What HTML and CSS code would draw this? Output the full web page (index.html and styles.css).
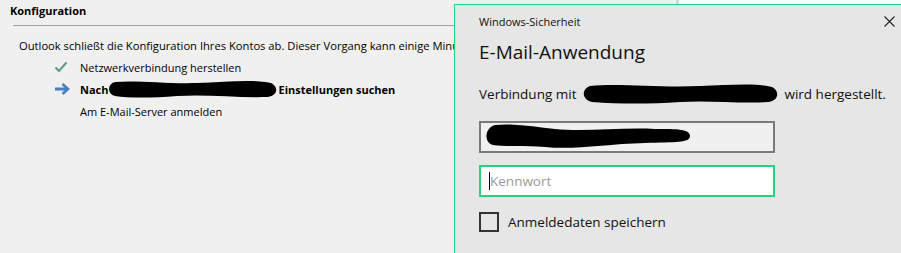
FILE: index.html
```html
<!doctype html>
<html>
<head>
  <link rel="stylesheet" href="styles.css">
</head>
<body>

  <div class="wizard">
    <div class="wizard-head">Konfiguration</div>
    <div class="wizard-rule"></div>
    <p class="intro">Outlook schließt die Konfiguration Ihres Kontos ab. Dieser Vorgang kann einige Minuten dauern.</p>
    <ul class="steps">
      <li class="step done">
        <span class="mark">
          <svg width="14" height="12" viewBox="0 0 14 12"><path d="M1.5 6.5 L5 10 L12.5 1.5" fill="none" stroke="#5f9e88" stroke-width="2.2"/></svg>
        </span>
        <span>Netzwerkverbindung herstellen</span>
      </li>
      <li class="step current">
        <span class="mark">
          <svg width="16" height="12" viewBox="0 0 16 12"><path d="M1 6 H13" stroke="#4a7fbd" stroke-width="3"/><path d="M8.5 1 L14 6 L8.5 11" fill="none" stroke="#4a7fbd" stroke-width="2.6"/></svg>
        </span>
        <span>Nach</span>
        <svg class="blot" width="172" height="20" viewBox="0 0 172 20"><path d="M8 3 C30 1 60 5 90 4 C120 3 145 0 164 4 C172 8 171 17 160 18 C130 19 100 15 70 17 C45 19 22 19 8 17 C0 15 0 5 8 3 Z" fill="#000"/></svg>
        <span>Einstellungen suchen</span>
      </li>
      <li class="step">
        <span class="mark"></span>
        <span>Am E-Mail-Server anmelden</span>
      </li>
    </ul>
  </div>

  <div class="edge"></div>

  <div class="dialog">
    <div class="dialog-top">
      <span class="dialog-caption">Windows-Sicherheit</span>
      <svg class="close" width="11" height="11" viewBox="0 0 11 11"><path d="M0.5 0.5 L10.5 10.5 M10.5 0.5 L0.5 10.5" stroke="#222" stroke-width="1.1"/></svg>
    </div>
    <div class="dialog-title">E-Mail-Anwendung</div>
    <div class="dialog-text">
      <span>Verbindung mit</span>
      <svg class="blot" width="200" height="22" viewBox="0 0 200 22"><path d="M10 3 C40 0 80 5 120 3 C150 2 175 0 192 4 C200 8 199 18 188 19 C160 21 130 17 100 19 C70 21 40 21 12 19 C2 17 1 6 10 3 Z" fill="#000"/></svg>
      <span>wird hergestellt.</span>
    </div>
    <div class="field filled">
      <svg width="206" height="26" viewBox="0 0 206 26"><path d="M10 1 C30 -1 50 3 70 5 C100 8 140 3 170 5 C192 5 205 5 205 12 C205 19 190 18 160 19 C120 20 90 26 60 23 C40 21 20 23 8 21 C-1 19 -1 4 10 1 Z" fill="#000"/></svg>
    </div>
    <div class="field focus">
      <span class="caret"></span>
      <span class="placeholder">Kennwort</span>
    </div>
    <label class="remember">
      <span class="box"></span>
      <span>Anmeldedaten speichern</span>
    </label>
  </div>

</body>
</html>
```

FILE: styles.css
```css
body{
  margin: 0;
  background-color: #f0f0f0;
  font-family: "Open Sans", "Noto Sans", sans-serif;
  color: #000;
  height: 253px;
  overflow: hidden;
  position: relative;
}
.wizard{
  width: 454px;
  overflow: hidden;
  padding-top: 3px;
  white-space: nowrap;
  font-size: 11px;
}
.wizard-head{
  font-weight: bold;
  font-size: 11px;
  padding-left: 10px;
  line-height: 16px;
}
.wizard-rule{
  height: 1px;
  background: #a0a0a0;
  margin: 6px 0 0 13px;
}
.intro{
  margin: 12px 0 0 19px;
  line-height: 16px;
  font-size: 11.2px;
}
.steps{
  list-style: none;
  margin: 2px 0 0 0;
  padding: 0 0 0 54px;
}
.step{
  display: flex;
  align-items: center;
  height: 22px;
}
.step .mark{
  width: 26px;
  display: flex;
  align-items: center;
}
.step.current{
  font-weight: bold;
}
.step .blot{
  margin: 0 -1px;
}
.edge{
  position: absolute;
  left: 676px;
  top: 0;
  width: 225px;
  height: 4px;
  background: #fff;
  border-left: 3px solid #d6d6d6;
}
.dialog{
  position: absolute;
  left: 454px;
  top: 4px;
  width: 460px;
  height: 260px;
  background: #e6e6e6;
  border: 1px solid #27d27a;
  padding: 0 0 0 24px;
  box-sizing: border-box;
}
.dialog-top{
  display: flex;
  align-items: center;
  height: 32px;
  padding-right: 28px;
}
.dialog-caption{
  font-size: 11px;
  flex: 1;
  color: #111;
}
.close{
  margin-right: -10px;
}
.dialog-title{
  font-size: 19px;
  line-height: 28px;
  margin-top: 1px;
  color: #111;
}
.dialog-text{
  display: flex;
  align-items: center;
  margin-top: 16px;
  font-size: 13.5px;
  height: 24px;
  color: #111;
}
.dialog-text .blot{
  margin: 0 4px;
}
.field{
  width: 296px;
  height: 32px;
  box-sizing: border-box;
  border: 2px solid #7a7a7a;
  background: #f0f0f0;
  margin-top: 15px;
  display: flex;
  align-items: center;
  padding-left: 4px;
}
.field.focus{
  border-color: #2ad17c;
  background: #fff;
  margin-top: 12px;
  padding-left: 8px;
}
.caret{
  width: 1px;
  height: 18px;
  background: #000;
}
.placeholder{
  font-size: 13.5px;
  color: #9a9a9a;
}
.remember{
  display: flex;
  align-items: center;
  margin-top: 15px;
  font-size: 13.5px;
  color: #111;
}
.box{
  width: 20px;
  height: 20px;
  box-sizing: border-box;
  border: 2px solid #333;
  margin-right: 9px;
}
```
